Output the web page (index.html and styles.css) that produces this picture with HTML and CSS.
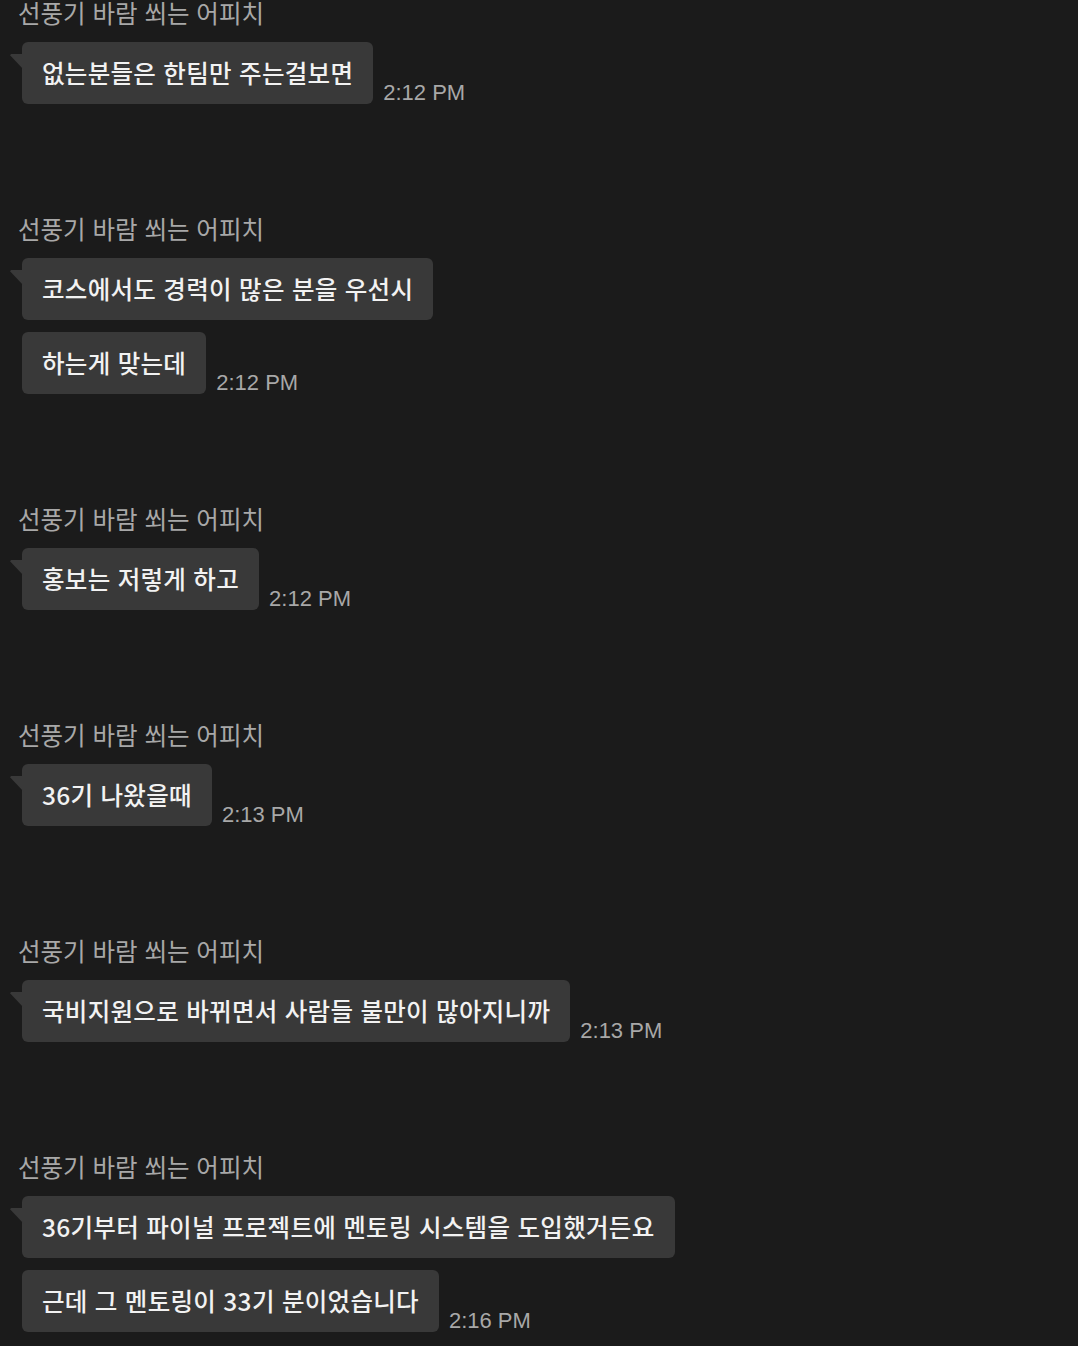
FILE: index.html
```html
<!DOCTYPE html>
<html lang="ko">
<head>
  <meta charset="UTF-8" />
  <meta name="viewport" content="width=device-width, initial-scale=1" />
  <title>채팅</title>
  <link rel="stylesheet" href="styles.css">
</head>
<body>
  <div class="chat">

    <div class="group">
      <div class="name">선풍기 바람 쐬는 어피치</div>
      <div class="row first">
        <div class="bubble">없는분들은 한팀만 주는걸보면</div>
        <span class="time">2:12 PM</span>
      </div>
    </div>

    <div class="group">
      <div class="name">선풍기 바람 쐬는 어피치</div>
      <div class="row first">
        <div class="bubble">코스에서도 경력이 많은 분을 우선시</div>
      </div>
      <div class="row">
        <div class="bubble">하는게 맞는데</div>
        <span class="time">2:12 PM</span>
      </div>
    </div>

    <div class="group">
      <div class="name">선풍기 바람 쐬는 어피치</div>
      <div class="row first">
        <div class="bubble">홍보는 저렇게 하고</div>
        <span class="time">2:12 PM</span>
      </div>
    </div>

    <div class="group">
      <div class="name">선풍기 바람 쐬는 어피치</div>
      <div class="row first">
        <div class="bubble">36기 나왔을때</div>
        <span class="time">2:13 PM</span>
      </div>
    </div>

    <div class="group">
      <div class="name">선풍기 바람 쐬는 어피치</div>
      <div class="row first">
        <div class="bubble">국비지원으로 바뀌면서 사람들 불만이 많아지니까</div>
        <span class="time">2:13 PM</span>
      </div>
    </div>

    <div class="group">
      <div class="name">선풍기 바람 쐬는 어피치</div>
      <div class="row first">
        <div class="bubble">36기부터 파이널 프로젝트에 멘토링 시스템을 도입했거든요</div>
      </div>
      <div class="row">
        <div class="bubble">근데 그 멘토링이 33기 분이었습니다</div>
        <span class="time">2:16 PM</span>
      </div>
    </div>

  </div>
</body>
</html>
```

FILE: styles.css
```css
body {
  margin: 0;
  background: #1b1b1b;
  font-family: 'Noto Sans CJK KR', 'Noto Sans', sans-serif;
  color: #f2f2f2;
}

.chat {
  display: flex;
  flex-direction: column;
  gap: 112px;
  padding: 0 0 0 18px;
}

.group {
  display: flex;
  flex-direction: column;
  gap: 12px;
}

.name {
  font-size: 24.5px;
  line-height: 26px;
  color: #a8a8a8;
  margin-bottom: 4px;
}

.row {
  display: flex;
  align-items: flex-end;
  gap: 10px;
  padding-left: 4px;
}

.bubble {
  position: relative;
  background: #393939;
  border-radius: 6px;
  padding: 16px 20px;
  font-size: 24.5px;
  line-height: 30px;
  letter-spacing: 0.3px;
  font-weight: 500;
  white-space: nowrap;
}

.first .bubble::before {
  content: "";
  position: absolute;
  left: -12px;
  top: 12px;
  width: 14px;
  height: 16px;
  background: #393939;
  clip-path: polygon(0 8%, 8% 0, 100% 0, 100% 100%);
}

.time {
  font-family: 'Liberation Sans', sans-serif;
  font-size: 22px;
  line-height: 22px;
  color: #a8a8a8;
}
```
